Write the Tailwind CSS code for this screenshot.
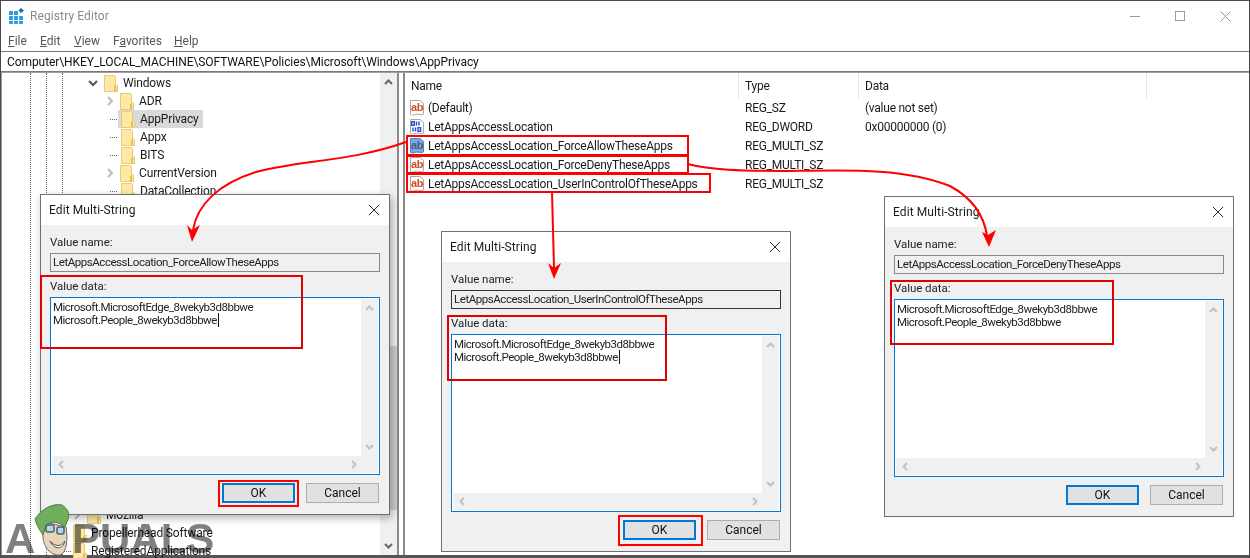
<!DOCTYPE html>
<html>
<head>
<meta charset="utf-8">
<script src="https://cdn.jsdelivr.net/npm/@tailwindcss/browser@4"></script>
<title>Registry Editor</title>
</head>
<body class="bg-white">
<svg width="0" height="0" class="absolute">
  <defs>
    <symbol id="folder" viewBox="0 0 14 17"><path d="M.5 .5H10.500L11.500 1.500V10H13.500V16.500H.5Z" fill="#ffe8a4" stroke="#e8cb78"/><path d="M11 10.500V16" stroke="#e3be5e" stroke-width="2"/></symbol>
    <symbol id="ab" viewBox="0 0 16 18"><path d="M1.500 1.500H11L14.500 4.500V15C11 17 9 14 6 15.500C4 16.500 3 16 1.500 15.500Z" fill="#fff" stroke="#a8a8a8"/><text x="2" y="11.500" font-family="Liberation Sans" font-weight="700" font-size="11" fill="#d9481c">ab</text></symbol>
    <symbol id="absel" viewBox="0 0 16 18"><path d="M1.500 1.500H11L14.500 4.500V15C11 17 9 14 6 15.500C4 16.500 3 16 1.500 15.500Z" fill="#7aabdf" stroke="#4d84c4"/><text x="2" y="11.500" font-family="Liberation Sans" font-weight="700" font-size="11" fill="#55557a">ab</text></symbol>
    <symbol id="bin" viewBox="0 0 16 18"><path d="M1.500 1.500H11L14.500 4.500V15C11 17 9 14 6 15.500C4 16.500 3 16 1.500 15.500Z" fill="#fff" stroke="#a8a8a8"/><g fill="none" stroke="#2a52c8" stroke-width="1.400"><rect x="2.700" y="3.700" width="2.600" height="3.600"/><path d="M7.500 3.500V7.500M10 3.500V7.500M4 9.500V13.500M6.500 9.500V13.500"/><rect x="9" y="9.700" width="2.600" height="3.600"/></g></symbol>
    <symbol id="up" viewBox="0 0 9 6"><path d="M1 5L4.500 1.500L8 5" fill="none" stroke="#c2c2c2" stroke-width="2"/></symbol>
    <symbol id="down" viewBox="0 0 9 6"><path d="M1 1L4.500 4.500L8 1" fill="none" stroke="#c2c2c2" stroke-width="2"/></symbol>
    <symbol id="left" viewBox="0 0 6 9"><path d="M5 1L1.500 4.500L5 8" fill="none" stroke="#c2c2c2" stroke-width="2"/></symbol>
    <symbol id="right" viewBox="0 0 6 9"><path d="M1 1L4.500 4.500L1 8" fill="none" stroke="#c2c2c2" stroke-width="2"/></symbol>
    <symbol id="x" viewBox="0 0 14 14"><path d="M1 1L13 13M13 1L1 13" stroke="#222" stroke-width="1.100"/></symbol>
  </defs>
</svg>

<div class="relative w-[1250px] h-[558px] overflow-hidden flex flex-col bg-white border-t border-l border-r border-[#4a4a4a] text-[12px] text-[#1a1a1a] [font-family:Roboto,sans-serif]">

  <!-- Title bar -->
  <div class="h-[30px] shrink-0 flex items-center pl-[8px]">
    <svg width="15" height="16" viewBox="0 0 15 16" class="mr-[6px]">
      <g fill="#2e9fe0"><rect x="0" y="3" width="4" height="4"/><rect x="5" y="3" width="4" height="4"/><rect x="0" y="8" width="4" height="4"/><rect x="5" y="8" width="4" height="4"/><rect x="10" y="8" width="4" height="4"/><rect x="0" y="13" width="4" height="3"/><rect x="5" y="13" width="4" height="3"/><rect x="10" y="13" width="4" height="3"/></g>
      <path d="M12 0L15 2.500L12 5L9.500 2.500Z" fill="#0f6fb4"/>
    </svg>
    <span class="text-[#8b8b8b] text-[12px] tracking-[0.1px]">Registry Editor</span>
    <div class="ml-auto flex items-center">
      <div class="w-[10px] h-px bg-[#9a9a9a] mr-[35px]"></div>
      <div class="w-[10px] h-[10px] border border-[#9a9a9a] mr-[35px]"></div>
      <svg width="11" height="11" class="mr-[18px]"><path d="M.5 .5L10.500 10.500M10.500 .5L.5 10.500" stroke="#9a9a9a"/></svg>
    </div>
  </div>

  <!-- Menu -->
  <div class="h-[20px] shrink-0 flex items-center pl-[7px] text-[#555] text-[12px]">
    <span class="w-[32px]"><u>F</u>ile</span>
    <span class="w-[34px]"><u>E</u>dit</span>
    <span class="w-[39px]"><u>V</u>iew</span>
    <span class="w-[61px]">F<u>a</u>vorites</span>
    <span><u>H</u>elp</span>
  </div>

  <!-- Address -->
  <div class="h-[21px] shrink-0 border-y border-[#7a7a7a] bg-white flex items-center pl-[6px] text-[12px] tracking-[-0.08px] text-[#111]">Computer\HKEY_LOCAL_MACHINE\SOFTWARE\Policies\Microsoft\Windows\AppPrivacy</div>

  <!-- Panes -->
  <div class="flex-1 min-h-0 flex border-b-[3px] border-[#555] border-t border-t-[#a0a0a0]">
    <!-- Tree -->
    <div class="relative w-[398px] shrink-0 flex border-l border-[#9a9a9a] border-r-2 border-r-[#8a8a8a]">
      <div class="flex-1 min-w-0 relative pt-px text-[12px] tracking-[-0.15px]">
        <div class="absolute left-[28px] top-0 bottom-0 border-l border-dotted border-[#666]"></div>
        <div class="absolute left-[44px] top-0 bottom-0 border-l border-dotted border-[#666]"></div>
        <div class="absolute left-[60px] top-0 bottom-0 border-l border-dotted border-[#666]"></div>

        <div class="h-[18px] flex items-center pl-[86px]"><svg width="10" height="7" class="mr-[6px]"><path d="M1 1L5 5L9 1" fill="none" stroke="#555" stroke-width="2"/></svg><svg width="14" height="17" class="mr-[5px]"><use href="#folder"/></svg>Windows</div>
        <div class="h-[18px] flex items-center pl-[105px]"><svg width="7" height="10" class="mr-[6px]"><path d="M1 1L5 5L1 9" fill="none" stroke="#bbb" stroke-width="2"/></svg><svg width="14" height="17" class="mr-[5px]"><use href="#folder"/></svg>ADR</div>
        <div class="h-[18px] flex items-center pl-[108px]"><span class="w-[7px] border-t border-dotted border-[#666]"></span><span class="ml-px flex items-center h-[18px] bg-[#d9d9d9] pr-[4px] pl-[3px]"><svg width="14" height="17" class="mr-[5px]"><use href="#folder"/></svg>AppPrivacy</span></div>
        <div class="h-[18px] flex items-center pl-[108px]"><span class="w-[7px] border-t border-dotted border-[#666] mr-[4px]"></span><svg width="14" height="17" class="mr-[5px]"><use href="#folder"/></svg>Appx</div>
        <div class="h-[18px] flex items-center pl-[108px]"><span class="w-[7px] border-t border-dotted border-[#666] mr-[4px]"></span><svg width="14" height="17" class="mr-[5px]"><use href="#folder"/></svg>BITS</div>
        <div class="h-[18px] flex items-center pl-[105px]"><svg width="7" height="10" class="mr-[6px]"><path d="M1 1L5 5L1 9" fill="none" stroke="#bbb" stroke-width="2"/></svg><svg width="14" height="17" class="mr-[5px]"><use href="#folder"/></svg>CurrentVersion</div>
        <div class="h-[18px] flex items-center pl-[108px]"><span class="w-[7px] border-t border-dotted border-[#666] mr-[4px]"></span><svg width="14" height="17" class="mr-[5px]"><use href="#folder"/></svg>DataCollection</div>

        <div class="h-[306px]"></div>
        <div class="h-[18px] flex items-center pl-[72px]"><svg width="7" height="10" class="mr-[6px]"><path d="M1 1L5 5L1 9" fill="none" stroke="#bbb" stroke-width="2"/></svg><svg width="14" height="17" class="mr-[5px]"><use href="#folder"/></svg>Mozilla</div>
        <div class="h-[18px] flex items-center pl-[62px]"><span class="w-[7px] mr-[2px]"></span><svg width="14" height="17" class="mr-[4px]"><use href="#folder"/></svg>Propellerhead Software</div>
        <div class="h-[18px] flex items-center pl-[61px]"><span class="w-[8px] border-t border-dotted border-[#666] mr-[2px]"></span><svg width="14" height="17" class="mr-[4px]"><use href="#folder"/></svg>RegisteredApplications</div>
      </div>
      <!-- Tree scrollbar -->
      <div class="w-[17px] shrink-0 bg-[#f0f0f0] flex flex-col items-center justify-between pt-[6px] pb-[6px]">
        <svg width="9" height="6"><path d="M1 5L4.500 1.500L8 5" fill="none" stroke="#666" stroke-width="2"/></svg>
        <div class="absolute right-0 top-[273px] w-[17px] h-[164px] bg-[#cdcdcd]"></div>
        <svg width="9" height="6"><path d="M1 1L4.500 4.500L8 1" fill="none" stroke="#666" stroke-width="2"/></svg>
      </div>
    </div>
    <div class="w-[4px] shrink-0"></div>

    <!-- List -->
    <div class="flex-1 min-w-0 border-l-2 border-[#8a8a8a] text-[12px] tracking-[-0.25px]">
      <div class="h-[25px] flex items-center">
        <div class="w-[334px] h-full flex items-center pl-[6px] border-r border-[#e5e5e5]">Name</div>
        <div class="w-[120px] h-full flex items-center pl-[6px] border-r border-[#e5e5e5]">Type</div>
        <div class="w-[288px] h-full flex items-center pl-[6px] border-r border-[#e5e5e5]">Data</div>
      </div>
      <div class="h-[19px] flex items-center"><div class="w-[334px] flex items-center pl-[4px]"><svg width="16" height="18" class="mr-[3px]"><use href="#ab"/></svg>(Default)</div><div class="w-[120px] pl-[6px]">REG_SZ</div><div class="pl-[6px]">(value not set)</div></div>
      <div class="h-[19px] flex items-center"><div class="w-[334px] flex items-center pl-[4px]"><svg width="16" height="18" class="mr-[3px]"><use href="#bin"/></svg>LetAppsAccessLocation</div><div class="w-[120px] pl-[6px]">REG_DWORD</div><div class="pl-[6px]">0x00000000 (0)</div></div>
      <div class="h-[19px] flex items-center"><div class="w-[334px] flex items-center pl-[4px]"><svg width="16" height="18" class="mr-[3px]"><use href="#absel"/></svg>LetAppsAccessLocation_ForceAllowTheseApps</div><div class="w-[120px] pl-[6px]">REG_MULTI_SZ</div></div>
      <div class="h-[19px] flex items-center"><div class="w-[334px] flex items-center pl-[4px]"><svg width="16" height="18" class="mr-[3px]"><use href="#ab"/></svg>LetAppsAccessLocation_ForceDenyTheseApps</div><div class="w-[120px] pl-[6px]">REG_MULTI_SZ</div></div>
      <div class="h-[19px] flex items-center"><div class="w-[334px] flex items-center pl-[4px]"><svg width="16" height="18" class="mr-[3px]"><use href="#ab"/></svg>LetAppsAccessLocation_UserInControlOfTheseApps</div><div class="w-[120px] pl-[6px]">REG_MULTI_SZ</div></div>
    </div>
  </div>

  <!-- Dialog 1 -->
  <div class="absolute left-[39px] top-[193px] w-[350px] h-[321px] bg-[#f0f0f0] border border-[#6f6f6f] shadow-[2px_3px_8px_rgba(0,0,0,0.3)] flex flex-col">
    <div class="h-[30px] shrink-0 bg-white flex items-center justify-between pl-[8px] pr-[9px] text-[12px] tracking-[0.1px]">Edit Multi-String<svg width="12" height="12"><use href="#x"/></svg></div>
    <div class="pl-[9px] pr-[9px] flex flex-col text-[11.5px] tracking-[-0.45px] text-[#222]">
      <div class="mt-[9px] h-[16px] leading-[16px] tracking-[-0.05px]">Value name:</div>
      <div class="mt-[3px] h-[19px] border border-[#8a8a8a] flex items-center pl-[2px]">LetAppsAccessLocation_ForceAllowTheseApps</div>
      <div class="mt-[6px] h-[16px] leading-[16px] tracking-[-0.05px]">Value data:</div>
      <div class="mt-[3px] h-[178px] border border-[#0078d7] bg-white p-px flex flex-col">
        <div class="flex-1 min-h-0 flex">
          <div class="flex-1 pl-[1px] pt-[2px] leading-[13px] tracking-[-0.5px]">Microsoft.MicrosoftEdge_8wekyb3d8bbwe<br><span class="border-r border-[#111] pr-px">Microsoft.People_8wekyb3d8bbwe</span></div>
          <div class="w-[17px] bg-[#f0f0f0] flex flex-col items-center justify-between py-[6px]"><svg width="9" height="6"><use href="#up"/></svg><svg width="9" height="6"><use href="#down"/></svg></div>
        </div>
        <div class="h-[17px] bg-[#f0f0f0] flex items-center justify-between pl-[6px] pr-[21px]"><svg width="6" height="9"><use href="#left"/></svg><svg width="6" height="9"><use href="#right"/></svg></div>
      </div>
      <div class="mt-[8px] flex justify-end gap-[11px] pr-[1px] text-[#111] text-[12px] tracking-normal">
        <div class="w-[73px] h-[20px] bg-[#e1e1e1] border-2 border-[#0078d7] flex items-center justify-center">OK</div>
        <div class="w-[73px] h-[20px] bg-[#e1e1e1] border border-[#adadad] flex items-center justify-center">Cancel</div>
      </div>
    </div>
  </div>

  <!-- Dialog 2 -->
  <div class="absolute left-[440px] top-[230px] w-[350px] h-[321px] bg-[#f0f0f0] border border-[#6f6f6f] flex flex-col">
    <div class="h-[30px] shrink-0 bg-white flex items-center justify-between pl-[8px] pr-[9px] text-[12px] tracking-[0.1px]">Edit Multi-String<svg width="12" height="12"><use href="#x"/></svg></div>
    <div class="pl-[9px] pr-[9px] flex flex-col text-[11.5px] tracking-[-0.45px] text-[#222]">
      <div class="mt-[9px] h-[16px] leading-[16px] tracking-[-0.05px]">Value name:</div>
      <div class="mt-[3px] h-[19px] border border-[#333] flex items-center pl-[2px]">LetAppsAccessLocation_UserInControlOfTheseApps</div>
      <div class="mt-[6px] h-[16px] leading-[16px] tracking-[-0.05px]">Value data:</div>
      <div class="mt-[3px] h-[178px] border border-[#0078d7] bg-white p-px flex flex-col">
        <div class="flex-1 min-h-0 flex">
          <div class="flex-1 pl-[1px] pt-[2px] leading-[13px] tracking-[-0.5px]">Microsoft.MicrosoftEdge_8wekyb3d8bbwe<br><span class="border-r border-[#111] pr-px">Microsoft.People_8wekyb3d8bbwe</span></div>
          <div class="w-[17px] bg-[#f0f0f0] flex flex-col items-center justify-between py-[6px]"><svg width="9" height="6"><use href="#up"/></svg><svg width="9" height="6"><use href="#down"/></svg></div>
        </div>
        <div class="h-[17px] bg-[#f0f0f0] flex items-center justify-between pl-[6px] pr-[21px]"><svg width="6" height="9"><use href="#left"/></svg><svg width="6" height="9"><use href="#right"/></svg></div>
      </div>
      <div class="mt-[8px] flex justify-end gap-[11px] pr-[1px] text-[#111] text-[12px] tracking-normal">
        <div class="w-[73px] h-[20px] bg-[#e1e1e1] border-2 border-[#0078d7] flex items-center justify-center">OK</div>
        <div class="w-[73px] h-[20px] bg-[#e1e1e1] border border-[#adadad] flex items-center justify-center">Cancel</div>
      </div>
    </div>
  </div>

  <!-- Dialog 3 -->
  <div class="absolute left-[883px] top-[195px] w-[350px] h-[321px] bg-[#f0f0f0] border border-[#6f6f6f] flex flex-col">
    <div class="h-[30px] shrink-0 bg-white flex items-center justify-between pl-[8px] pr-[9px] text-[12px] tracking-[0.1px]">Edit Multi-String<svg width="12" height="12"><use href="#x"/></svg></div>
    <div class="pl-[9px] pr-[9px] flex flex-col text-[11.5px] tracking-[-0.45px] text-[#222]">
      <div class="mt-[9px] h-[16px] leading-[16px] tracking-[-0.05px]">Value name:</div>
      <div class="mt-[3px] h-[19px] border border-[#8a8a8a] flex items-center pl-[2px]">LetAppsAccessLocation_ForceDenyTheseApps</div>
      <div class="mt-[6px] h-[16px] leading-[16px] tracking-[-0.05px]">Value data:</div>
      <div class="mt-[3px] h-[178px] border border-[#0078d7] bg-white p-px flex flex-col">
        <div class="flex-1 min-h-0 flex">
          <div class="flex-1 pl-[1px] pt-[2px] leading-[13px] tracking-[-0.5px]">Microsoft.MicrosoftEdge_8wekyb3d8bbwe<br>Microsoft.People_8wekyb3d8bbwe</div>
          <div class="w-[17px] bg-[#f0f0f0] flex flex-col items-center justify-between py-[6px]"><svg width="9" height="6"><use href="#up"/></svg><svg width="9" height="6"><use href="#down"/></svg></div>
        </div>
        <div class="h-[17px] bg-[#f0f0f0] flex items-center justify-between pl-[6px] pr-[21px]"><svg width="6" height="9"><use href="#left"/></svg><svg width="6" height="9"><use href="#right"/></svg></div>
      </div>
      <div class="mt-[8px] flex justify-end gap-[11px] pr-[1px] text-[#111] text-[12px] tracking-normal">
        <div class="w-[73px] h-[20px] bg-[#e1e1e1] border-2 border-[#0078d7] flex items-center justify-center">OK</div>
        <div class="w-[73px] h-[20px] bg-[#e1e1e1] border border-[#adadad] flex items-center justify-center">Cancel</div>
      </div>
    </div>
  </div>

  <!-- Red highlight boxes -->
  <div class="absolute left-[405px] top-[134px] w-[283px] h-[21px] border-2 border-[#f00]"></div>
  <div class="absolute left-[405px] top-[154px] w-[283px] h-[19px] border-2 border-[#f00]"></div>
  <div class="absolute left-[405px] top-[172px] w-[305px] h-[20px] border-2 border-[#f00]"></div>
  <div class="absolute left-[39px] top-[274px] w-[263px] h-[74px] border-2 border-[#e00000]"></div>
  <div class="absolute left-[217px] top-[479px] w-[81px] h-[27px] border-2 border-[#f00]"></div>
  <div class="absolute left-[446px] top-[314px] w-[220px] h-[66px] border-2 border-[#e00000]"></div>
  <div class="absolute left-[617px] top-[514px] w-[85px] h-[31px] border-2 border-[#f00]"></div>
  <div class="absolute left-[889px] top-[279px] w-[224px] h-[65px] border-2 border-[#e00000]"></div>

  <!-- Arrows -->
  <svg class="absolute left-[-1px] top-[-1px]" width="1250" height="558" viewBox="0 0 1250 558" fill="none">
    <path d="M406 142C350 162 300 160 256 172C218 184 197 205 193 230" stroke="#f00" stroke-width="2"/>
    <path d="M192 242L187 225L192 230L200 225Z" fill="#f00"/>
    <path d="M552 192L554 268" stroke="#f00" stroke-width="2"/>
    <path d="M554 279L548 263L554 268L561 263Z" fill="#f00"/>
    <path d="M688 164C710 170 740 171 790 171C850 170 905 168 950 186C972 198 984 215 987 236" stroke="#f00" stroke-width="2"/>
    <path d="M989 247L982 232L988 235L996 230Z" fill="#f00"/>
  </svg>

  <!-- Watermark -->
  <div class="absolute left-[4px] top-[514px] h-[42px] w-[215px] text-[42px] leading-[48px] font-bold text-[#808080] mix-blend-multiply [font-family:'Liberation_Sans',sans-serif] flex">
    <span class="w-[67px]">A</span><span>PUALS</span>
  </div>
  <svg class="absolute left-[32px] top-[502px]" width="40" height="56" viewBox="0 0 40 56">
    <path d="M10 30C9 44 18 53 27 52C34 50 35 36 33 24L16 20Z" fill="#e9d5b7" stroke="#6a6a6a"/>
    <path d="M2 16C8 6 20 0 29 2C35 6 37 11 35 16L32 24C25 18 18 18 13 22L10 32C6 26 3 21 2 16Z" fill="#6fae5c" stroke="#4e7f40"/>
    <g fill="#b9d6ea" stroke="#49606f" stroke-width="1.500"><rect x="13" y="22" width="8" height="7" rx="2"/><rect x="24" y="24" width="7" height="7" rx="2"/></g>
    <path d="M17 38C22 44 28 44 32 38C30 47 21 47 17 38Z" fill="#fff" stroke="#555"/>
  </svg>
</div>
</body>
</html>
